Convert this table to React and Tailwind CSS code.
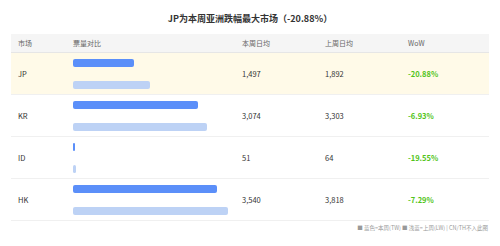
const rows = [
  { market: 'JP', tw: 1497, lw: 1892, wow: '-20.88%', highlight: true },
  { market: 'KR', tw: 3074, lw: 3303, wow: '-6.93%' },
  { market: 'ID', tw: 51, lw: 64, wow: '-19.55%' },
  { market: 'HK', tw: 3540, lw: 3818, wow: '-7.29%' },
]

const MAX = 3818
const BAR_MAX = 155

// bar width in px, tiny values still get a sliver
const barWidth = (v) => Math.max(2, Math.round((v / MAX) * BAR_MAX))

const fmt = (n) => n.toLocaleString('en-US')

const App = () => {
  return (
    <div
      className="w-[500px] h-[246px] bg-white text-[#333] overflow-hidden"
      style={{ fontFamily: '"Noto Sans CJK SC", "Noto Sans", sans-serif' }}
    >
      <div className="h-[34px] flex items-center justify-center pt-[2px]">
        <h1 className="text-[9px] font-bold text-[#333] leading-none">
          JP为本周亚洲跌幅最大市场（-20.88%）
        </h1>
      </div>

      <div className="mx-[11px]">
        {/* header */}
        <div className="grid grid-cols-[55px_169px_83px_83px_88px] h-[19px] items-center bg-[#f5f5f5] border-b border-[#e6e6e6] text-[7px] text-[#666]">
          <div className="px-[7px]">市场</div>
          <div className="px-[7px]">票量对比</div>
          <div className="px-[7px]">本周日均</div>
          <div className="px-[7px]">上周日均</div>
          <div className="px-[7px]">WoW</div>
        </div>

        {rows.map((r) => (
          <div
            key={r.market}
            className={`grid grid-cols-[55px_169px_83px_83px_88px] h-[42px] items-center border-b border-[#f0f0f0] text-[7.5px] ${r.highlight ? 'bg-[#fffae8]' : 'bg-white'}`}
          >
            <div className="px-[7px]">{r.market}</div>
            <div className="px-[7px] flex flex-col gap-[14px]">
              <div className="h-[8px] rounded-[2px] bg-[#5b8ff9]" style={{ width: barWidth(r.tw) }} />
              <div className="h-[8px] rounded-[2px] bg-[#bdd2f5]" style={{ width: barWidth(r.lw) }} />
            </div>
            <div className="px-[7px]">{fmt(r.tw)}</div>
            <div className="px-[7px]">{fmt(r.lw)}</div>
            <div className="px-[7px] text-[#52c41a] font-semibold">{r.wow}</div>
          </div>
        ))}

        <div className="flex justify-end pt-[5px] pr-[1px] text-[5.5px] text-[#999] leading-none">
          ■ 蓝色=本周(TW) ■ 浅蓝=上周(LW) | CN/TH不入此图
        </div>
      </div>
    </div>
  )
}

export default App
